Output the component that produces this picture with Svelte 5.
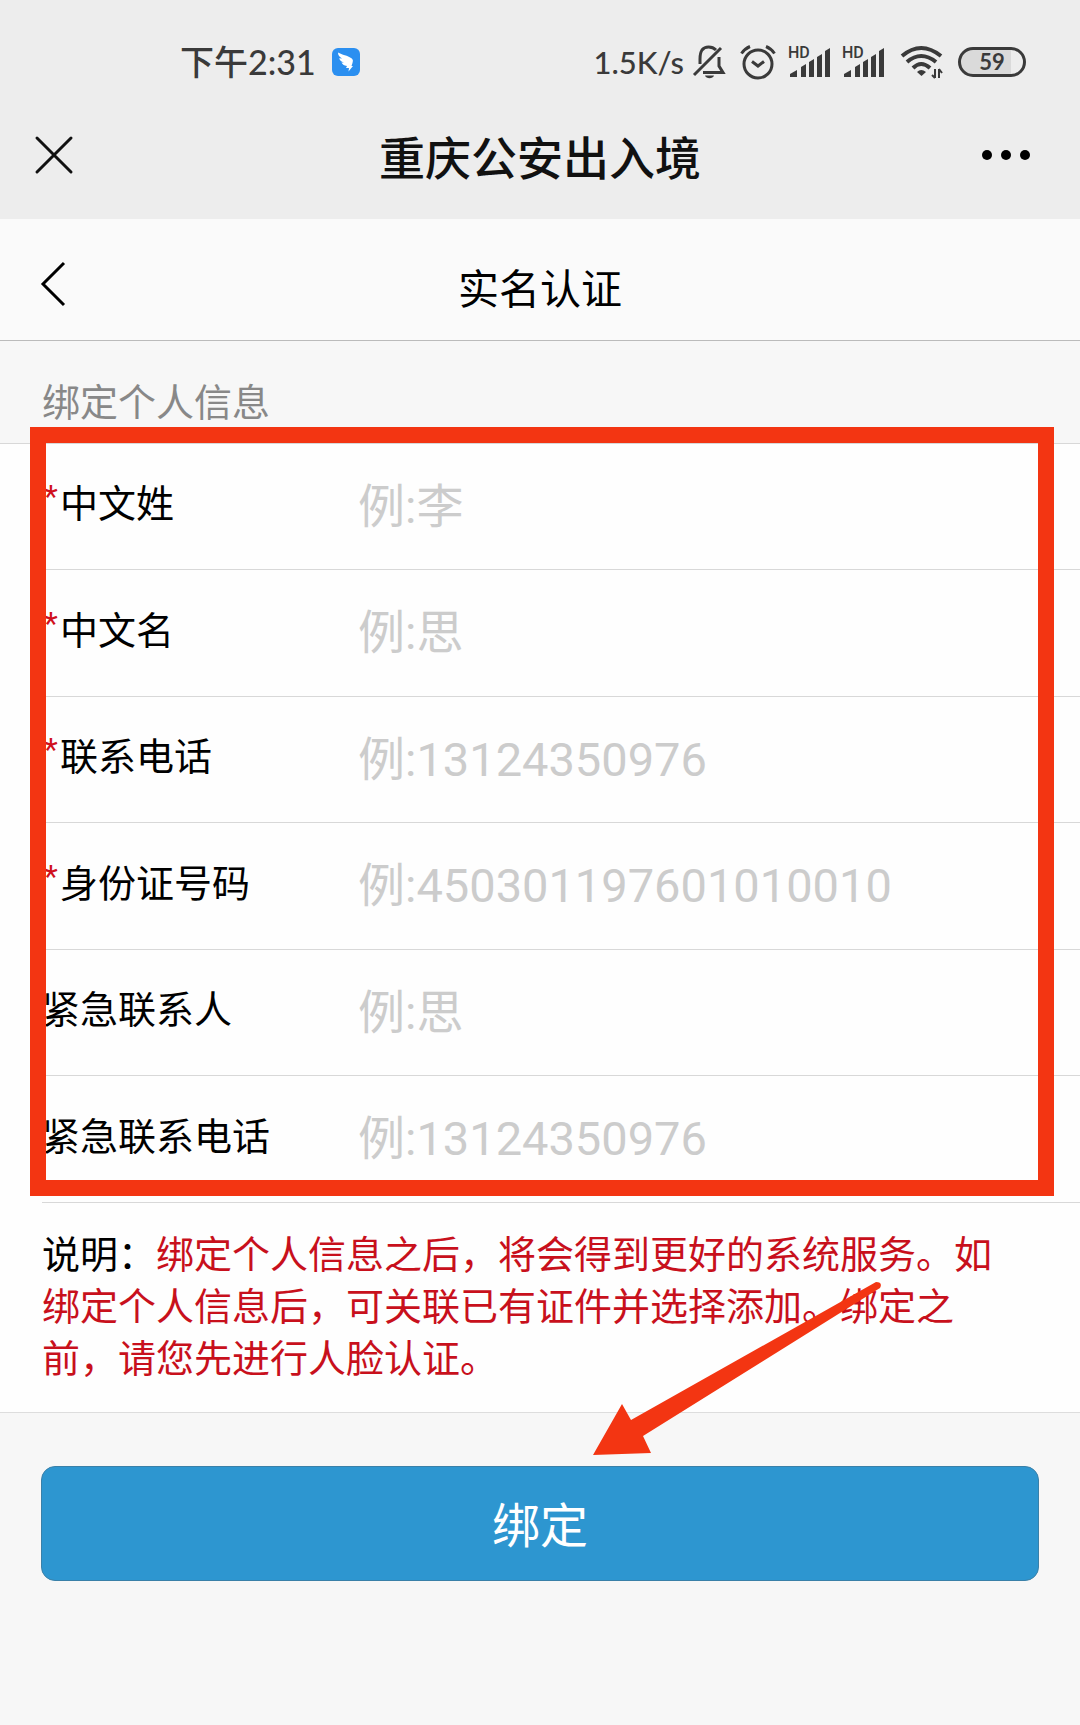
<script lang="ts">
	const fields = [
		{ id: 'surname', label: '中文姓', placeholder: '例:李', type: 'text', required: true },
		{ id: 'given-name', label: '中文名', placeholder: '例:思', type: 'text', required: true },
		{ id: 'phone', label: '联系电话', placeholder: '例:13124350976', type: 'tel', required: true },
		{ id: 'id-number', label: '身份证号码', placeholder: '例:450301197601010010', type: 'text', required: true },
		{ id: 'contact', label: '紧急联系人', placeholder: '例:思', type: 'text', required: false },
		{ id: 'contact-phone', label: '紧急联系电话', placeholder: '例:13124350976', type: 'tel', required: false }
	];

	let values = $state<Record<string, string>>({});

	function handleSubmit(e: SubmitEvent) {
		e.preventDefault();
	}
</script>

{#snippet signal()}
	<svg class="signal" viewBox="0 0 42 36" width="42" height="36" aria-hidden="true">
		<text x="0" y="14" class="hd">HD</text>
		<path d="M2 33v-3l7-4v7zM13 33v-10l5-3v13zM21 33v-15l5-3v18zM29 33v-20l5-3v23zM37 33V7l5-3v29z" />
	</svg>
{/snippet}

<div class="page">
	<header class="top">
		<div class="status-bar">
			<span class="time">下午2:31</span>
			<svg class="ding" viewBox="0 0 28 28" width="28" height="28" aria-hidden="true">
				<rect width="28" height="28" rx="6" fill="#2b8ff0" />
				<path
					d="M6 4.500C10 7 16 7.500 19 10C21.500 11.500 21 13 20.500 15L19.500 18H21L16.500 23.500L17 20H14L15 18C12 17.500 10 16 9.500 14.500L12 14.500C9 13.500 7.500 12 7.200 10.200L10 10.500C7.500 9 6 7.500 6 4.500Z"
					fill="#fff"
				/>
			</svg>
			<div class="status-icons">
				<span class="speed">1.5K/s</span>
				<svg class="bell" viewBox="0 0 34 34" width="34" height="34" fill="none" stroke="currentColor" stroke-width="3" aria-hidden="true">
					<path d="M2 30L29 3" />
					<path d="M24 5C20 1 13 1 10 5C8 8 8 11 8 14V19" />
					<path d="M27 12V21L31 27.500H11" />
					<path d="M13 30.500H22C21 34 14 34 13 30.500Z" fill="currentColor" stroke="none" />
				</svg>
				<svg class="alarm" viewBox="0 0 36 36" width="36" height="36" fill="none" stroke="currentColor" stroke-width="3" aria-hidden="true">
					<circle cx="18" cy="20" r="14" />
					<path d="M1.500 9.500Q5 4.500 10 2.500M34.500 9.500Q31 4.500 26 2.500M12 17.500L18 22L24 17.500" />
				</svg>
				{@render signal()}
				{@render signal()}
				<svg class="wifi" viewBox="0 0 44 34" width="44" height="34" fill="none" stroke="currentColor" stroke-width="4" aria-hidden="true">
					<path d="M2 11Q21 -5 41 11M7 17Q21 5 36 17M13 23Q21 15 30 23" />
					<path d="M17 27Q21 23 26 27L21.500 31Z" fill="currentColor" stroke="none" />
					<path d="M35 24V33M39 33V24M32 30L35 33M39 24L42 28" stroke-width="2" />
				</svg>
				<span class="battery">59</span>
			</div>
		</div>
		<div class="nav-bar">
			<button class="icon-btn" aria-label="关闭">
				<svg viewBox="0 0 40 40" width="40" height="40" fill="none" stroke="#111" stroke-width="3" stroke-linecap="round">
					<path d="M3 3L37 37M37 3L3 37" />
				</svg>
			</button>
			<h1>重庆公安出入境</h1>
			<button class="icon-btn more" aria-label="更多">
				<svg viewBox="0 0 48 12" width="48" height="12">
					<circle cx="5" cy="6" r="5" />
					<circle cx="24" cy="6" r="5" />
					<circle cx="43" cy="6" r="5" />
				</svg>
			</button>
		</div>
	</header>

	<div class="sub-header">
		<button class="icon-btn" aria-label="返回">
			<svg viewBox="0 0 26 46" width="26" height="46" fill="none" stroke="#000" stroke-width="3">
				<path d="M24 2L3 23L24 44" />
			</svg>
		</button>
		<h2>实名认证</h2>
	</div>

	<form onsubmit={handleSubmit}>
		<h3>绑定个人信息</h3>

		<div class="fields">
			{#each fields as field}
				<div class="field">
					<label for={field.id}>
						{#if field.required}<span class="star">*</span>{/if}{field.label}
					</label>
					<input id={field.id} type={field.type} placeholder={field.placeholder} bind:value={values[field.id]} />
				</div>
			{/each}
		</div>

		<div class="note">
			<p>
				说明：<span>绑定个人信息之后，将会得到更好的系统服务。如绑定个人信息后，可关联已有证件并选择添加。绑定之前，请您先进行人脸认证。</span>
			</p>
			<svg class="arrow" viewBox="0 0 288 173" width="288" height="173" aria-hidden="true">
				<path d="M0 173L29 122L38 138L283 0Q290 0 287 6L50 154L58 171Z" />
			</svg>
		</div>

		<div class="actions">
			<button type="submit" class="submit">绑定</button>
		</div>
	</form>
</div>

<style>
	:global(body) {
		margin: 0;
		background: #f7f7f7;
	}

	.page {
		min-height: 100vh;
		background: #f7f7f7;
		color: #000;
		font-family: Roboto, 'Noto Sans CJK SC', sans-serif;
	}

	h1,
	h2,
	h3,
	p {
		margin: 0;
		font-weight: 400;
	}

	.icon-btn {
		display: flex;
		padding: 0;
		border: none;
		background: none;
		cursor: pointer;
	}

	.top {
		background: #ededed;
	}

	.status-bar {
		display: flex;
		align-items: center;
		gap: 16px;
		padding: 40px 54px 0 180px;
		height: 44px;
		color: #3a3a3a;
		font-family: Lato, 'Noto Sans CJK SC', sans-serif;
		font-weight: 500;
	}

	.time {
		font-size: 34px;
		line-height: 44px;
	}

	.status-icons {
		display: flex;
		align-items: center;
		gap: 12px;
		margin-left: auto;
	}

	.speed {
		margin-right: -4px;
		font-size: 31px;
		line-height: 44px;
	}

	.bell {
		margin-right: 2px;
	}

	.signal {
		overflow: visible;
		fill: currentColor;
	}

	.wifi {
		margin: 0 2px 0 4px;
	}

	.hd {
		font-family: Roboto, sans-serif;
		font-size: 16px;
		font-weight: 500;
	}

	.battery {
		box-sizing: border-box;
		width: 68px;
		height: 30px;
		border: 3px solid #3a3a3a;
		border-radius: 15px;
		background: linear-gradient(90deg, #dadada 80%, #ededed 80%);
		font-size: 22px;
		font-weight: 700;
		line-height: 24px;
		text-align: center;
	}

	.nav-bar {
		display: grid;
		grid-template-columns: 1fr auto 1fr;
		align-items: center;
		padding: 6px 50px 0 34px;
		height: 129px;
	}

	.nav-bar h1 {
		padding: 8px 0 0 16px;
		color: #111;
		font-size: 46px;
		font-weight: 500;
		line-height: 64px;
	}

	.more {
		justify-self: end;
	}

	.sub-header {
		display: grid;
		grid-template-columns: 1fr auto 1fr;
		align-items: center;
		padding: 8px 40px 0;
		height: 113px;
		background: #fafafa;
		border-bottom: 1px solid #bbb;
	}

	.sub-header h2 {
		padding-top: 12px;
		font-size: 41px;
		line-height: 56px;
	}

	h3 {
		padding: 36px 42px 14px;
		border-bottom: 1px solid #d8d8d8;
		color: #888;
		font-size: 38px;
		line-height: 52px;
	}

	.fields {
		position: relative;
		padding-left: 42px;
		background: #fefefe;
	}

	/* highlight frame over the whole field list */
	.fields::after {
		content: '';
		position: absolute;
		inset: -17px 26px 7px 30px;
		border: 16px solid #f33512;
		pointer-events: none;
	}

	.field {
		display: grid;
		grid-template-columns: 316px 1fr;
		align-items: center;
		box-sizing: border-box;
		height: 126px;
		padding-bottom: 5px;
		border-bottom: 1px solid #d8d8d8;
	}

	.field:nth-child(even) {
		height: 127px;
	}

	label {
		font-size: 38px;
		line-height: 52px;
	}

	.star {
		display: inline-block;
		box-sizing: border-box;
		width: 18px;
		padding-left: 2px;
		color: #d0101c;
		font-size: 32px;
		line-height: 28px;
		vertical-align: 10px;
	}

	input {
		min-width: 0;
		padding: 5px 0 0;
		border: none;
		outline: none;
		background: none;
		color: #000;
		font-family: inherit;
		font-size: 47px;
		line-height: 64px;
	}

	input::placeholder {
		color: #ccc;
		opacity: 1;
	}

	.note {
		position: relative;
		padding: 26px 60px 27px 42px;
		background: #fefefe;
		border-bottom: 1px solid #ddd;
	}

	.note p {
		font-size: 38px;
		line-height: 52px;
	}

	.note span {
		color: #c8101c;
	}

	.arrow {
		position: absolute;
		right: 199px;
		bottom: -43px;
		fill: #f33512;
		pointer-events: none;
	}

	.actions {
		padding: 53px 41px;
	}

	.submit {
		display: block;
		width: 100%;
		height: 115px;
		padding: 0 0 4px;
		border: 1px solid #3a80a8;
		border-radius: 14px;
		background: #2d96d0;
		color: #fff;
		font-family: inherit;
		font-size: 48px;
		cursor: pointer;
	}
</style>
